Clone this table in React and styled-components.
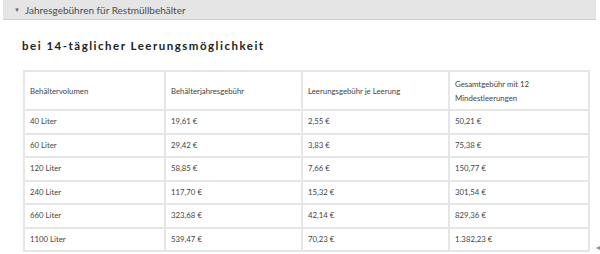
import React from 'react';
import styled, { createGlobalStyle } from 'styled-components';

const GlobalStyle = createGlobalStyle`
  html, body {
    margin: 0;
    padding: 0;
    background: #ffffff;
    font-family: Lato, "Open Sans", sans-serif;
  }
`;

export const Page = styled.div`
  position: relative;
  width: 600px;
  height: 254px;
  overflow: hidden;
`;

export const AccordionHead = styled.div`
  display: flex;
  align-items: center;
  gap: 5px;
  margin-left: 3px;
  width: 593px;
  height: 20px;
  padding-left: 11px;
  box-sizing: border-box;
  background: #e5e5e5;
  border-bottom: 1px solid #cfcfcf;
  color: #4d4d4d;
  font-size: 10px;
`;

export const Caret = styled.span`
  font-size: 6px;
  color: #666;
  line-height: 1;
`;

export const Body = styled.div`
  padding: 19px 0 0 22px;
`;

export const Title = styled.h3`
  margin: 0 0 17px 0;
  font-size: 11.5px;
  font-weight: 700;
  letter-spacing: 1.5px;
  color: #222;
  line-height: 14px;
`;

export const Table = styled.table`
  margin-left: 1px;
  width: 565px;
  border-collapse: collapse;
  table-layout: fixed;
  border: 2px solid #e8e8e8;
`;

export const Cell = styled.td`
  border: 2px solid #e6e6e6;
  padding: ${(p) => (p.$head ? '4.5px 5px' : '5px 5px')};
  font-size: 7.8px;
  line-height: ${(p) => (p.$head ? 14 : 11.5)}px;
  color: #444;
  vertical-align: middle;
`;

export const Corner = styled.span`
  position: absolute;
  right: 0;
  bottom: 2px;
  font-size: 8px;
  color: #888;
`;

const widths = [141, 137, 147, 140];

const rows = [
  ['40 Liter', '19,61 €', '2,55 €', '50,21 €'],
  ['60 Liter', '29,42 €', '3,83 €', '75,38 €'],
  ['120 Liter', '58,85 €', '7,66 €', '150,77 €'],
  ['240 Liter', '117,70 €', '15,32 €', '301,54 €'],
  ['660 Liter', '323,68 €', '42,14 €', '829,36 €'],
  ['1100 Liter', '539,47 €', '70,23 €', '1.382,23 €'],
];

const App = () => {
  return (
    <Page>
      <GlobalStyle />
      <AccordionHead>
        <Caret>▼</Caret>
        Jahresgebühren für Restmüllbehälter
      </AccordionHead>
      <Body>
        <Title>bei 14-täglicher Leerungsmöglichkeit</Title>
        <Table>
          <colgroup>
            {widths.map((w, i) => (
              <col key={i} style={{ width: w }} />
            ))}
          </colgroup>
          <tbody>
            <tr>
              <Cell $head>Behältervolumen</Cell>
              <Cell $head>Behälterjahresgebühr</Cell>
              <Cell $head>Leerungsgebühr je Leerung</Cell>
              <Cell $head>Gesamtgebühr mit 12 Mindestleerungen</Cell>
            </tr>
            {rows.map((r, i) => (
              <tr key={i}>
                {r.map((c, j) => (
                  <Cell key={j}>{c}</Cell>
                ))}
              </tr>
            ))}
          </tbody>
        </Table>
      </Body>
      <Corner>◂</Corner>
    </Page>
  );
};

export default App;
